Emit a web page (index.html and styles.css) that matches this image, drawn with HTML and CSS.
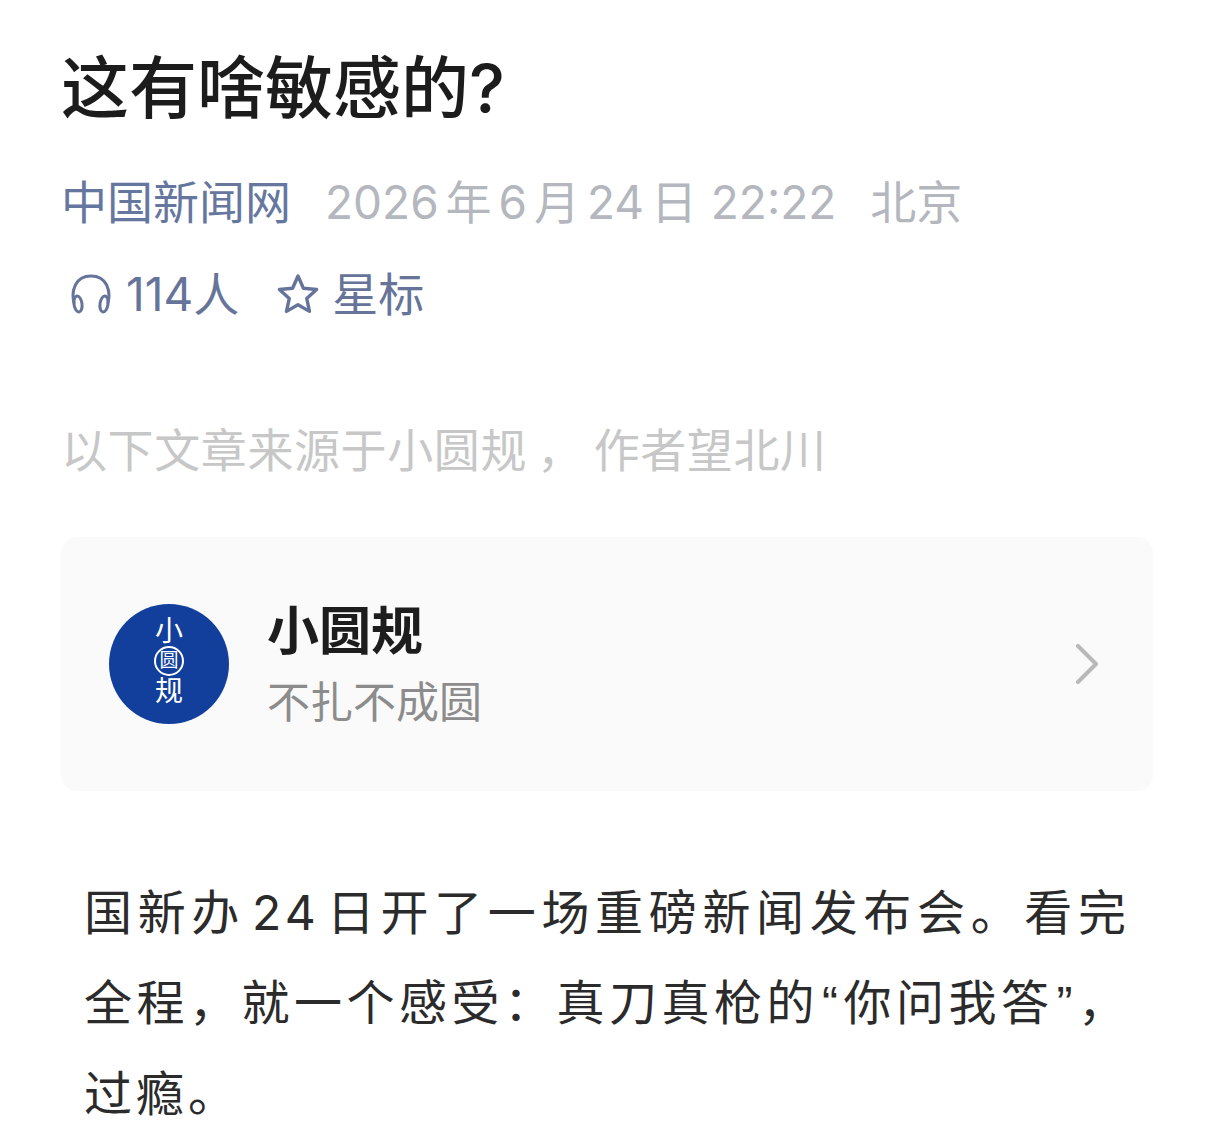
FILE: index.html
```html
<!DOCTYPE html>
<html lang="zh-CN">
<head>
  <meta charset="UTF-8" />
  <meta name="viewport" content="width=device-width, initial-scale=1.0"/>
  <title>这有啥敏感的?</title>
  <link rel="stylesheet" href="styles.css">
</head>
<body>
  <h1 class="title">这有啥敏感的?</h1>

  <div class="meta">
    <span class="source">中国新闻网</span>
    <span class="date">2026 年 6 月 24 日&nbsp; 22:22</span>
    <span class="place">北京</span>
  </div>

  <div class="actions">
    <span class="action action-listen">
      <svg class="icon" viewBox="0 0 42 42" width="42" height="42" fill="none" stroke="#66749a" stroke-width="3" stroke-linecap="round" stroke-linejoin="round">
        <path d="M4 30C1 18 5 3 21 3s20 15 17 27"/>
        <ellipse cx="8" cy="31" rx="4" ry="8" transform="rotate(-8 8 31)"/>
        <ellipse cx="34" cy="31" rx="4" ry="8" transform="rotate(8 34 31)"/>
      </svg>
      114人
    </span>
    <span class="action">
      <svg class="icon" viewBox="0 0 44 44" width="44" height="44" fill="none" stroke="#66749a" stroke-width="3.4" stroke-linejoin="round">
        <path d="M22 4l5.4 12.2 13.2 1.3-9.9 8.9 2.8 13L22 32.7l-11.5 6.7 2.8-13-9.9-8.9 13.2-1.3z"/>
      </svg>
      星标
    </span>
  </div>

  <p class="origin">以下文章来源于小圆规 ， 作者望北川</p>

  <div class="card">
    <div class="avatar">
      <span>小</span>
      <span class="avatar-ring">圆</span>
      <span>规</span>
    </div>
    <div class="card-text">
      <div class="card-name">小圆规</div>
      <div class="card-desc">不扎不成圆</div>
    </div>
    <svg class="chevron" viewBox="0 0 24 40" width="24" height="40" fill="none" stroke="#b9b9b9" stroke-width="4" stroke-linecap="round" stroke-linejoin="round">
      <path d="M3 2l18 18L3 38"/>
    </svg>
  </div>

  <p class="article">国新办 24 日开了一场重磅新闻发布会。看完全程，就一个感受：真刀真枪的<span class="quote">“</span>你问我答<span class="quote">”</span>，过瘾。</p>
</body>
</html>
```

FILE: styles.css
```css
html, body {
  height: 100%;
}

body {
  margin: 0;
  padding: 52px 62px 0 61px;
  box-sizing: border-box;
  overflow: hidden;
  background-color: #fff;
  font-family: Inter, "Noto Sans CJK SC", "Noto Sans", sans-serif;
  color: #1a1a1a;
}

.title {
  margin: 0;
  font-size: 68px;
  line-height: 72px;
  font-weight: 500;
  color: #1c1c1c;
}

.meta {
  display: flex;
  gap: 34px;
  margin-top: 50px;
  font-size: 46px;
  line-height: 56px;
  white-space: nowrap;
  color: #b4b7bd;
}

.date {
  word-spacing: -6px;
}

.source {
  color: #66779f;
}

.actions {
  display: flex;
  gap: 37px;
  margin-top: 36px;
  margin-left: 9px;
  font-size: 46px;
  line-height: 56px;
  color: #66749a;
}

.action {
  display: flex;
  align-items: center;
  gap: 12px;
}

.action-listen {
  gap: 14px;
}

.origin {
  margin: 100px 0 0;
  font-size: 46px;
  line-height: 56px;
  letter-spacing: 0.6px;
  word-spacing: -3.5px;
  color: #c7c7c7;
  white-space: nowrap;
}

.card {
  display: flex;
  align-items: center;
  height: 254px;
  margin-top: 59px;
  padding: 0 54px 0 48px;
  border-radius: 16px;
  background-color: #fafafa;
}

.avatar {
  display: flex;
  flex-direction: column;
  align-items: center;
  justify-content: center;
  flex-shrink: 0;
  box-sizing: border-box;
  width: 120px;
  height: 120px;
  padding-bottom: 6px;
  border-radius: 50%;
  background-color: #123f9b;
  color: #fff;
  font-size: 28px;
  line-height: 28px;
}

.avatar-ring {
  width: 26px;
  height: 26px;
  margin: 1px 0;
  border: 2px solid #fff;
  border-radius: 50%;
  font-size: 19px;
  line-height: 26px;
  text-align: center;
}

.card-text {
  flex: 1;
  margin-left: 38px;
}

.card-name {
  font-size: 52px;
  line-height: 70px;
  font-weight: 700;
  color: #1d1d1d;
}

.card-desc {
  margin-top: 5px;
  font-size: 43px;
  line-height: 60px;
  color: #8c8c8c;
}

.article {
  margin: 77px 23px 0;
  font-size: 48px;
  line-height: 90px;
  letter-spacing: 4px;
  word-spacing: -12px;
  text-align: justify;
  color: #2b2b2b;
}

.quote {
  padding: 0 1px 0 3px;
  font-family: "Liberation Sans", sans-serif;
}
```
